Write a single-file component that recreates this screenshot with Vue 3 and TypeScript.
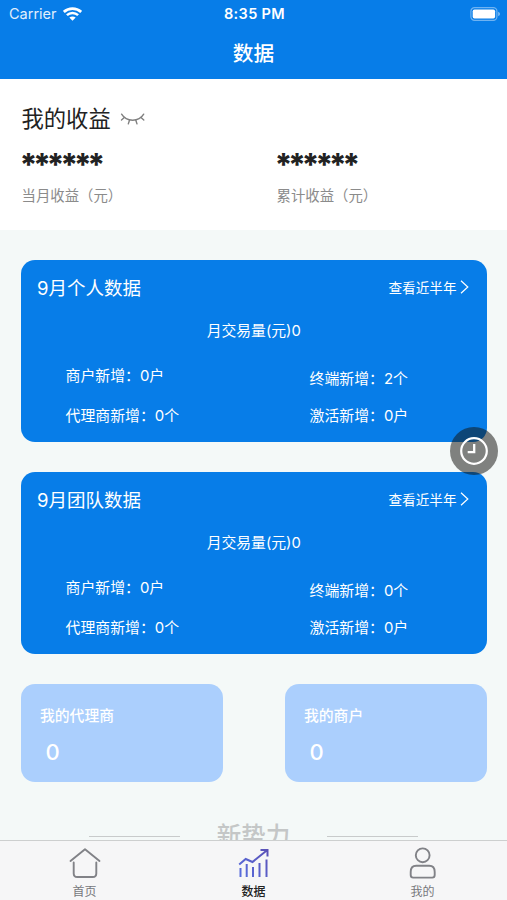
<script setup lang="ts">
interface Stat {
  label: string
  value: string
}

interface Panel {
  title: string
  amount: number
  left: Stat[]
  right: Stat[]
}

const earnings: string[] = ['当月收益（元）', '累计收益（元）']

const panels: Panel[] = [
  {
    title: '9月个人数据',
    amount: 0,
    left: [
      { label: '商户新增', value: '0户' },
      { label: '代理商新增', value: '0个' },
    ],
    right: [
      { label: '终端新增', value: '2个' },
      { label: '激活新增', value: '0户' },
    ],
  },
  {
    title: '9月团队数据',
    amount: 0,
    left: [
      { label: '商户新增', value: '0户' },
      { label: '代理商新增', value: '0个' },
    ],
    right: [
      { label: '终端新增', value: '0个' },
      { label: '激活新增', value: '0户' },
    ],
  },
]

const tiles = [
  { name: '我的代理商', count: 0 },
  { name: '我的商户', count: 0 },
]
</script>

<template>
  <div class="screen">
    <header class="header">
      <div class="status">
        <div class="carrier">
          <span>Carrier</span>
          <svg class="wifi" width="19" height="14" viewBox="0 0 19 14">
            <path d="M.8 4.900C5.600.4 13.400.4 18.200 4.900" fill="none" stroke="#fff" stroke-width="2.700" />
            <path d="M3.900 8.200C7 5.200 12 5.200 15.100 8.200" fill="none" stroke="#fff" stroke-width="2.500" />
            <path d="M6.300 10.600C8.100 9 10.900 9 12.700 10.600L9.500 13.700Z" fill="#fff" />
          </svg>
        </div>
        <div class="clock">8:35 PM</div>
        <div class="power">
          <svg width="30" height="14" viewBox="0 0 30 14">
            <rect x=".9" y=".7" width="26" height="12.600" rx="3.600" fill="none" stroke="#fff" stroke-opacity=".42" stroke-width="1.200" />
            <rect x="2.700" y="2.500" width="22.400" height="9" rx="1.800" fill="#fff" />
            <path d="M28.200 4.800Q30 5.600 30 7T28.200 9.200Z" fill="#fff" fill-opacity=".5" />
          </svg>
        </div>
      </div>
      <h1 class="heading">数据</h1>
    </header>

    <main class="content">
      <section class="income">
        <div class="income-title">
          <span>我的收益</span>
          <svg width="26" height="14" viewBox="0 0 26 14" fill="none" stroke="#808080" stroke-width="1.400" stroke-linecap="round">
            <path d="M1.600 2.200C6.500 10.200 18.800 10.200 23.700 2.200" />
            <path d="M4.300 5.400L1.500 8M9.500 8.200L8.300 11.900M15.800 8.200L17 11.900M21 5.400L23.800 8" />
          </svg>
        </div>
        <div class="income-grid">
          <div v-for="label in earnings" :key="label">
            <div class="masked">******</div>
            <div class="caption">{{ label }}</div>
          </div>
        </div>
      </section>

      <section v-for="panel in panels" :key="panel.title" class="panel">
        <div class="panel-head">
          <h2>{{ panel.title }}</h2>
          <a class="more">
            <span>查看近半年</span>
            <svg width="9" height="14" viewBox="0 0 9 14">
              <path d="M1 .8L7.800 7L1 13.200" fill="none" stroke="#fff" stroke-width="1.200" />
            </svg>
          </a>
        </div>
        <div class="amount">月交易量(元){{ panel.amount }}</div>
        <div class="stats">
          <div class="col">
            <div v-for="s in panel.left" :key="s.label">{{ s.label }}：{{ s.value }}</div>
          </div>
          <div class="col col-right">
            <div v-for="s in panel.right" :key="s.label">{{ s.label }}：{{ s.value }}</div>
          </div>
        </div>
      </section>

      <div class="tiles">
        <div v-for="tile in tiles" :key="tile.name" class="tile">
          <div class="tile-name">{{ tile.name }}</div>
          <div class="tile-count">{{ tile.count }}</div>
        </div>
      </div>

      <div class="divider">
        <i></i>
        <span>新势力</span>
        <i></i>
      </div>
    </main>

    <nav class="tabs">
      <div class="tab">
        <svg width="34" height="34" viewBox="0 0 34 34" fill="none" stroke="#818287" stroke-width="1.900" stroke-linecap="round" stroke-linejoin="round">
          <path d="M2.500 15L17 3.300L31.500 15" />
          <path d="M5.700 16.500V27.500Q5.700 31 9.200 31H24.800Q28.300 31 28.300 27.500V16.500" />
        </svg>
        <span>首页</span>
      </div>
      <div class="tab active">
        <svg width="34" height="34" viewBox="0 0 34 34" fill="none" stroke="url(#trend)" stroke-width="2">
          <defs>
            <linearGradient id="trend" gradientUnits="userSpaceOnUse" x1="2" y1="30" x2="32" y2="4">
              <stop offset="0" stop-color="#586ede" />
              <stop offset="1" stop-color="#5b50b5" />
            </linearGradient>
          </defs>
          <path d="M2.200 18.500L8.700 13L15.500 16L30 4.200M23.500 4H30.500V10.500" />
          <path d="M3.500 22V31M9.700 18V31M16 21V31M22.500 17V31M29.500 13.500V31" />
        </svg>
        <span>数据</span>
      </div>
      <div class="tab">
        <svg width="34" height="34" viewBox="0 0 34 34" fill="none" stroke="#818287" stroke-width="1.900">
          <circle cx="16.700" cy="9.300" r="6.900" />
          <path d="M10.200 19.800H23.200C26.700 19.800 28.700 22.300 28.700 26V29Q28.700 31.600 26.200 31.600H7.200Q4.700 31.600 4.700 29V26C4.700 22.300 6.700 19.800 10.200 19.800Z" />
        </svg>
        <span>我的</span>
      </div>
    </nav>

    <button class="history" aria-label="历史">
      <svg width="30" height="30" viewBox="0 0 30 30" fill="none" stroke="#fff">
        <circle cx="15" cy="15" r="12.800" stroke-width="2.200" />
        <path d="M15.200 8V16.200H8.700" stroke-width="2.300" />
      </svg>
    </button>
  </div>
</template>

<style>
body {
  margin: 0;
  overflow: hidden;
}
</style>

<style scoped>
.screen {
  position: relative;
  display: flex;
  flex-direction: column;
  height: 900px;
  overflow: hidden;
  background: #f4f9f8;
  color: #222;
  font-family: Inter, "Noto Sans CJK SC", sans-serif;
}

.header {
  flex: none;
  box-sizing: border-box;
  height: 79px;
  background: #077de8;
  color: #fff;
}

.status {
  display: grid;
  grid-template-columns: 1fr auto 1fr;
  align-items: center;
  height: 27px;
  padding: 0 7px 0 9px;
  font-size: 14.5px;
}

.carrier {
  display: flex;
  align-items: center;
  gap: 6px;
}

.carrier span {
  opacity: 0.88;
}

.clock {
  font-size: 14.5px;
  font-weight: 600;
  letter-spacing: 0.35px;
}

.power {
  display: flex;
  justify-content: flex-end;
}

.heading {
  margin: 0;
  font-size: 20.7px;
  font-weight: 500;
  line-height: 53px;
  text-align: center;
}

.content {
  flex: 1;
  min-height: 0;
  overflow: hidden;
}

.income {
  box-sizing: border-box;
  height: 151px;
  padding: 24px 21.5px 0;
  background: #fff;
}

.income-title {
  display: flex;
  align-items: center;
  gap: 9px;
  height: 32px;
  font-size: 22.3px;
  line-height: 32px;
}

.income-grid {
  display: grid;
  grid-template-columns: 255px 1fr;
}

.masked {
  height: 46px;
  margin-left: -2px;
  font-size: 31px;
  font-weight: 800;
  letter-spacing: -4.5px;
  line-height: 60px;
}

.caption {
  font-size: 14.4px;
  line-height: 29px;
  color: #8b8b8b;
}

.panel {
  box-sizing: border-box;
  height: 182px;
  margin: 30px 20px 0 21px;
  padding: 12px 18.5px 0 16px;
  border-radius: 14px;
  background: #077de8;
  color: #fff;
}

.panel-head {
  display: flex;
  align-items: center;
  justify-content: space-between;
  height: 30px;
}

h2 {
  margin: 0;
  padding-top: 1px;
  font-size: 18.5px;
  font-weight: 400;
  line-height: 30px;
}

.more {
  display: flex;
  align-items: center;
  gap: 3px;
  font-size: 13.6px;
}

.amount {
  margin-top: 18px;
  padding-left: 2px;
  font-size: 14.8px;
  line-height: 22px;
  text-align: center;
}

.stats {
  display: grid;
  grid-template-columns: 244px 1fr;
  padding: 23px 0 0 28.5px;
  font-size: 14.9px;
  line-height: 22px;
}

.col {
  display: grid;
  align-content: start;
  row-gap: 17.5px;
}

.col-right {
  padding-top: 3px;
  row-gap: 14.5px;
}

.tiles {
  display: flex;
  justify-content: space-between;
  margin: 30px 20px 0 21px;
}

.tile {
  box-sizing: border-box;
  width: 202px;
  height: 98px;
  padding: 20px 19px 0;
  border-radius: 14px;
  background: #abcffd;
  color: #fff;
}

.tile-name {
  font-size: 14.8px;
  font-weight: 500;
  line-height: 24px;
}

.tile-count {
  padding-left: 5.5px;
  font-size: 22px;
  font-weight: 500;
  line-height: 48px;
}

.divider {
  display: flex;
  align-items: center;
  justify-content: center;
  gap: 37px;
  margin-top: 36px;
  font-size: 24.5px;
  font-weight: 500;
  line-height: 36px;
  color: #c4c7c7;
}

.divider i {
  width: 91px;
  height: 1px;
  background: #c8cbcb;
}

.tabs {
  flex: none;
  box-sizing: border-box;
  display: grid;
  grid-template-columns: repeat(3, 1fr);
  height: 60px;
  padding-top: 5px;
  border-top: 1px solid #cdcfcf;
  background: #f6f6f7;
}

.tab {
  display: flex;
  flex-direction: column;
  align-items: center;
  font-size: 12px;
  line-height: 23px;
  color: #77787c;
}

.tab.active {
  color: #222;
  font-weight: 500;
}

.tab svg {
  display: block;
}

.history {
  position: absolute;
  top: 427px;
  left: 450px;
  display: flex;
  align-items: center;
  justify-content: center;
  width: 48px;
  height: 48px;
  padding: 0;
  border: 0;
  border-radius: 50%;
  background: rgba(20, 20, 15, 0.52);
}
</style>
